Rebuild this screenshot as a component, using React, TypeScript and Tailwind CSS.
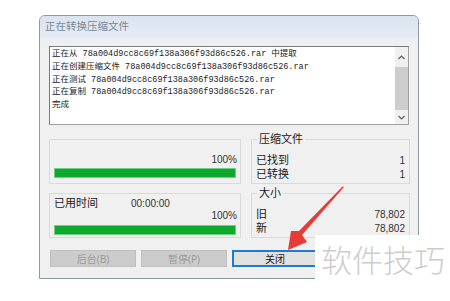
const ui = { fontFamily: '"Noto Sans", "Noto Sans CJK SC", sans-serif' };
const log = { fontFamily: '"Liberation Mono", "Noto Sans CJK SC", monospace' };
const num = { fontFamily: '"Liberation Sans", "Noto Sans CJK SC", sans-serif' };

const lines = [
  "正在从 78a004d9cc8c69f138a306f93d86c526.rar 中提取",
  "正在创建压缩文件 78a004d9cc8c69f138a306f93d86c526.rar",
  "正在测试 78a004d9cc8c69f138a306f93d86c526.rar",
  "正在复制 78a004d9cc8c69f138a306f93d86c526.rar",
  "完成",
];

const Chevron = ({ up }: { up?: boolean }) => (
  <svg width="7" height="5" viewBox="0 0 7 5">
    <path
      d={up ? "M0.5 4 L3.5 1 L6.5 4" : "M0.5 1 L3.5 4 L6.5 1"}
      fill="none"
      stroke="#606060"
      strokeWidth="1.2"
    />
  </svg>
);

const Bar = ({ h }: { h: string }) => (
  <div className={`${h} mx-[4px] bg-[#0ea82c] border border-[#6fcf82]`} />
);

const Group = ({ title, rows }: { title: string; rows: [string, string][] }) => (
  <div className="relative h-[45px] border border-[#d9d9d9] px-[4px] pt-[13px]">
    <span className="absolute -top-[9px] left-[5px] bg-[#f0f0f0] px-[2px] text-[11px] leading-[16px] text-[#1a1a1a]">
      {title}
    </span>
    {rows.map(([k, v]) => (
      <div key={k} className="flex justify-between items-center h-[14px] text-[11px] text-[#1a1a1a]">
        <span>{k}</span>
        <span style={num} className="text-[10px] text-[#333]">{v}</span>
      </div>
    ))}
  </div>
);

export default function App() {
  return (
    <div className="relative w-[450px] h-[301px] bg-white overflow-hidden" style={ui}>
      {/* dialog */}
      <div className="ml-[39px] mt-[15px] w-[380px] h-[264px] border border-[#8e98a5] rounded-t-[6px] bg-[#f0f0f0] flex flex-col overflow-hidden">
        <div className="h-[22px] shrink-0 bg-gradient-to-b from-[#d9e4f0] to-[#e4ebf4] flex items-center pl-[5px] text-[10.5px] text-[#7d8792]">
          正在转换压缩文件
        </div>
        <div className="px-[9px] pt-[8px] bg-gradient-to-b from-[#e9eef4] to-[#f0f0f0] to-[10px] flex-1">
          {/* log */}
          <div className="h-[79px] w-[360px] bg-white border border-[#a0a0a0] border-t-[#7a7a7a] border-l-[#7a7a7a] flex">
            <div className="flex-1 pl-[2px] pt-[1px] text-[8.5px] leading-[12.8px] text-[#222]" style={log}>
              {lines.map((l) => (
                <div key={l} className="whitespace-pre">{l}</div>
              ))}
            </div>
            <div className="w-[13px] bg-[#f0f0f0] flex flex-col items-center">
              <div className="h-[20px] flex items-center justify-center">
                <Chevron up />
              </div>
              <div className="w-[13px] h-[43px] bg-[#cdcdcd]" />
              <div className="flex-1 flex items-center justify-center">
                <Chevron />
              </div>
            </div>
          </div>

          {/* panels */}
          <div className="mt-[14px] grid grid-cols-[192px_159px] gap-x-[10px] gap-y-[9px]">
            <div className="h-[45px] border border-[#d9d9d9] pt-[14px]">
              <div style={num} className="text-right pr-[3px] text-[10px] leading-[12px] text-[#333]">100%</div>
              <div className="mt-[2px]">
                <Bar h="h-[10px]" />
              </div>
            </div>
            <Group title="压缩文件" rows={[["已找到", "1"], ["已转换", "1"]]} />
            <div className="h-[45px] border border-[#d9d9d9] pt-[2px]">
              <div className="flex items-center h-[14px] pl-[4px] text-[11px] text-[#1a1a1a]">
                <span className="w-[77px]">已用时间</span>
                <span style={num} className="text-[10px] text-[#333]">00:00:00</span>
              </div>
              <div style={num} className="text-right pr-[3px] text-[10px] leading-[10px] mt-[1px] text-[#333]">100%</div>
              <div className="mt-[4px]">
                <Bar h="h-[10px]" />
              </div>
            </div>
            <Group title="大小" rows={[["旧", "78,802"], ["新", "78,802"]]} />
          </div>

          {/* buttons */}
          <div className="mt-[12px] ml-[1px] flex gap-[5px]">
            <button className="w-[86px] h-[17px] bg-[#cccccc] border border-[#bfbfbf] text-[10px] leading-none text-[#9a9a9a]">
              后台(B)
            </button>
            <button className="w-[86px] h-[17px] bg-[#cccccc] border border-[#bfbfbf] text-[10px] leading-none text-[#9a9a9a]">
              暂停(P)
            </button>
            <button className="w-[86px] h-[17px] bg-[#e1e1e1] border-2 border-[#1f7ad1] text-[10px] leading-none text-[#1a1a1a]">
              关闭
            </button>
          </div>
        </div>
      </div>

      {/* red arrow annotation */}
      <svg className="absolute left-0 top-0" width="450" height="301" viewBox="0 0 450 301">
        <polygon
          points="344,187 342.5,186.5 299,231 291,231 288,250 307,242 302,235"
          fill="#e83a36"
        />
      </svg>

      {/* watermark */}
      <div className="absolute left-[315px] top-[235px] w-[135px] h-[50px] bg-white flex items-center pl-[6px] text-[31px] font-light text-[#cdcdcd] tracking-[0px]">
        软件技巧
      </div>
    </div>
  );
}
